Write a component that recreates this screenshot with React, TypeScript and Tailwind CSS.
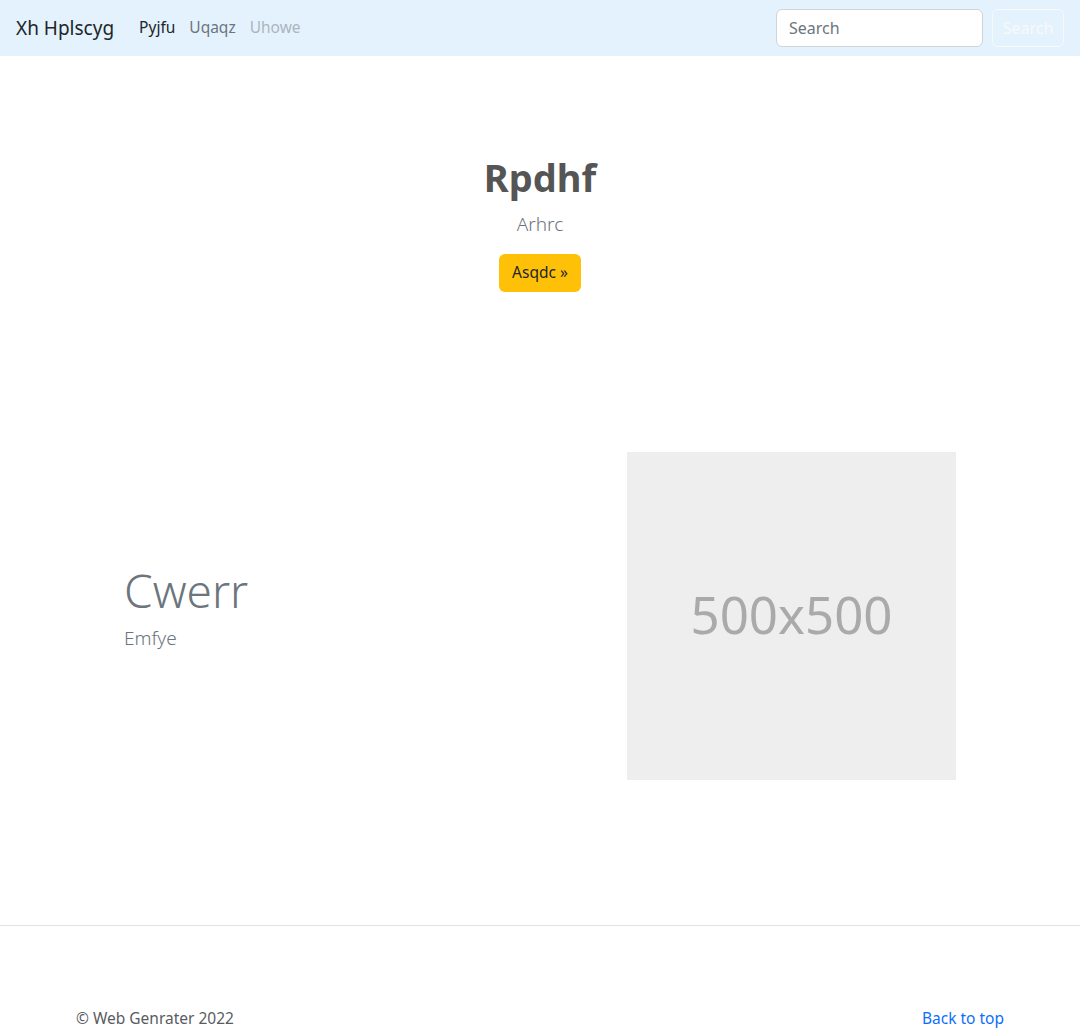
import React from "react";

export default function App() {
  const font = { fontFamily: '"Noto Sans", "Open Sans", sans-serif' };
  return (
    <div className="w-[1080px] min-h-[1030px] bg-white text-[#212529]" style={font}>
      <nav className="h-[56px] bg-[#e3f2fd] flex items-center px-4">
        <span className="text-[19px] text-[#212529] mr-[25px]">Xh Hplscyg</span>
        <div className="flex items-center gap-[14px] text-[15.5px]">
          <span className="text-[#212529]">Pyjfu</span>
          <span className="text-[#6c757d]">Uqaqz</span>
          <span className="text-[#adb5bd]">Uhowe</span>
        </div>
        <div className="ml-auto flex items-center gap-[9px]">
          <input
            className="w-[207px] h-[38px] rounded-[6px] border border-[#ced4da] bg-white px-3 text-[16px] text-[#212529] placeholder:text-[#6c757d] outline-none"
            placeholder="Search"
            style={font}
          />
          <button className="h-[38px] w-[72px] rounded-[6px] border border-[#f8f9fa] text-[#f8f9fa] text-[16px]" style={font}>
            Search
          </button>
        </div>
      </nav>

      <section className="flex flex-col items-center pt-[94px] pb-[160px]">
        <h1 className="text-[38px] font-bold leading-[54px] text-[#555555]">Rpdhf</h1>
        <p className="text-[19px] font-light text-[#6c757d] mt-[5px] leading-[30px]">Arhrc</p>
        <button className="mt-[15px] h-[38px] w-[82px] rounded-[6px] bg-[#ffc107] text-[15.5px] text-[#212529]">
          Asqdc »
        </button>
      </section>

      <section className="flex items-center">
        <div className="w-[627px] pl-[124px] pb-[19px]">
          <h2 className="text-[46px] font-light leading-[58px] text-[#6c757d]">Cwerr</h2>
          <p className="text-[19px] font-light text-[#6c757d] leading-[28px] mt-[5px]">Emfye</p>
        </div>
        <div className="w-[329px] h-[328px] bg-[#eeeeee] flex items-center justify-center pb-[4px]">
          <span className="text-[51px] text-[#aaaaaa]">500x500</span>
        </div>
      </section>

      <div className="mt-[145px] border-t border-[#dee2e6]" />

      <footer className="flex justify-between px-[76px] pt-[81px] text-[15.5px]">
        <span className="text-[#595c5f]">© Web Genrater 2022</span>
        <span className="text-[#0d6efd]">Back to top</span>
      </footer>
    </div>
  );
}
